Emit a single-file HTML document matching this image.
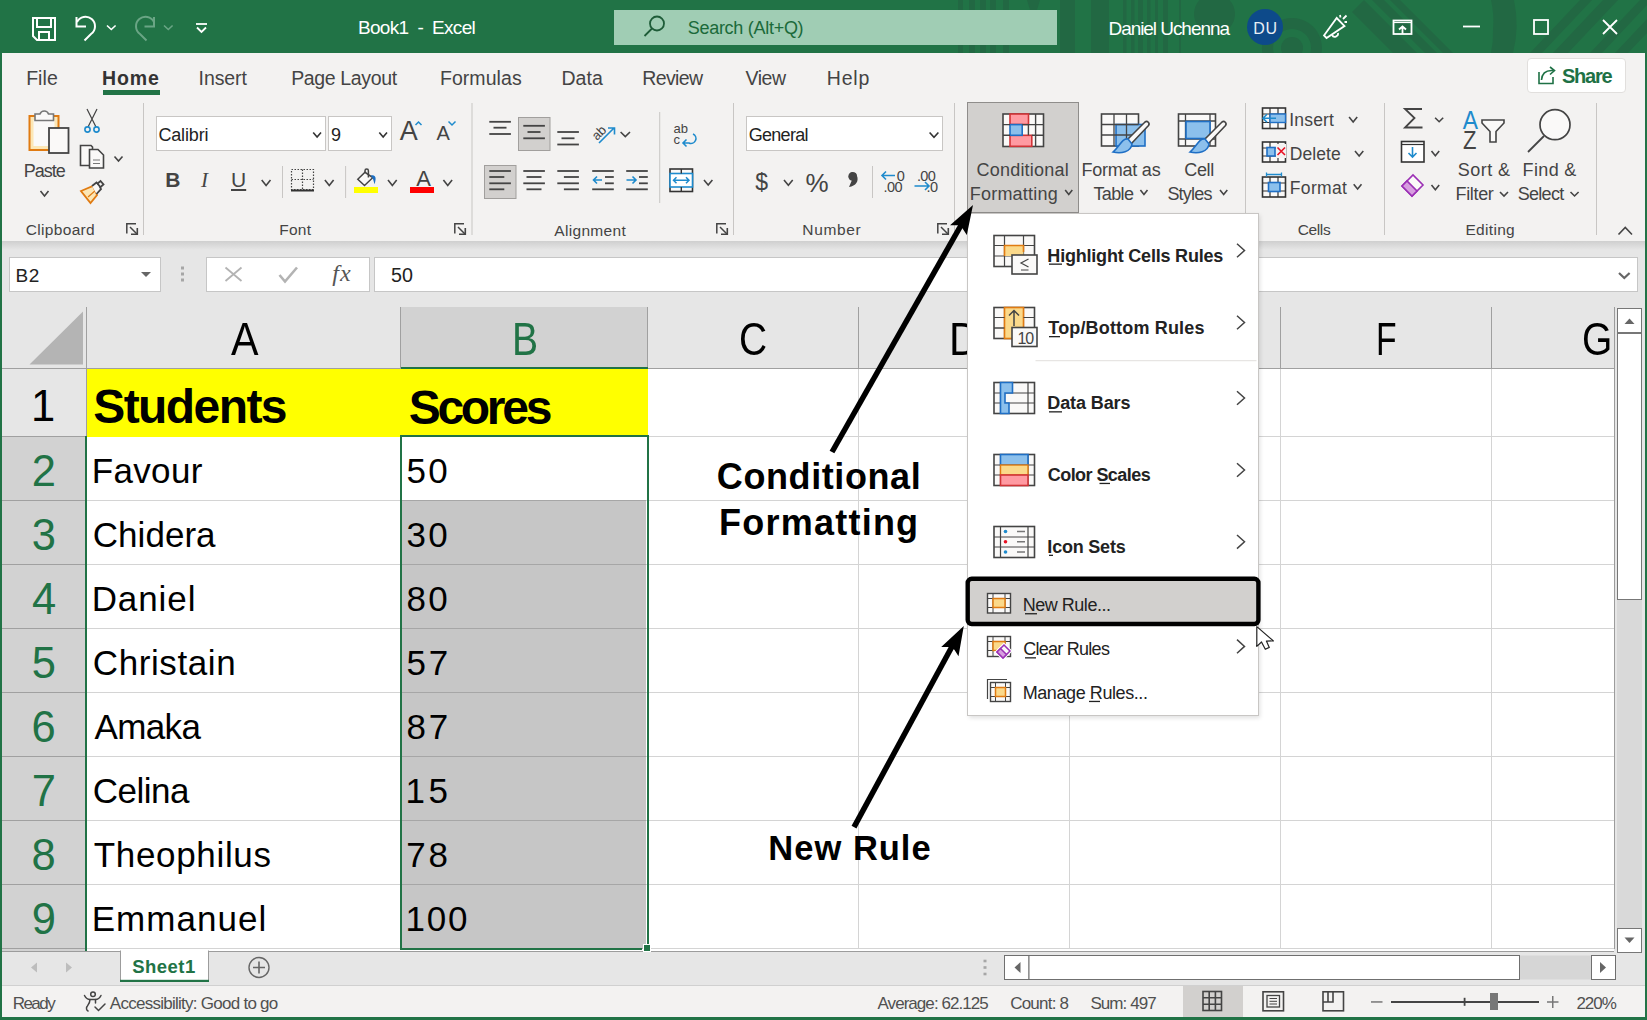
<!DOCTYPE html>
<html><head><meta charset="utf-8">
<style>
*{margin:0;padding:0;box-sizing:border-box}
html,body{width:1647px;height:1020px;overflow:hidden;background:#217346;font-family:"Liberation Sans",sans-serif}
.a{position:absolute}
.t{position:absolute;white-space:pre;line-height:normal}
svg{position:absolute;left:0;top:0;overflow:visible}
</style></head><body>

<div class="a" style="left:0;top:0;width:1647px;height:53px;background:#217346"></div>
<div class="a" style="left:2px;top:53px;width:1643px;height:188px;background:#f3f2f1"></div>
<div class="a" style="left:2px;top:241px;width:1643px;height:712px;background:#e6e6e6"></div>
<div class="a" style="left:2px;top:241px;width:1643px;height:9px;background:linear-gradient(#cfcfcf,#e6e6e6)"></div>
<svg width="1647" height="53" viewBox="0 0 1647 53" style="overflow:hidden">
 <g fill="#226843">
  <rect x="958" y="0" width="5" height="53"/><rect x="969" y="0" width="6" height="53"/><rect x="980" y="0" width="6" height="53"/><rect x="990" y="0" width="6" height="53"/><rect x="1003" y="0" width="6" height="53"/>
  <path d="M1027 0 H1040 L1037 10 H1030 Z"/>
  <rect x="1060" y="0" width="15" height="53"/><rect x="1091" y="0" width="18" height="53"/>
  <rect x="1123" y="0" width="3.5" height="53"/><rect x="1131" y="0" width="3.5" height="53"/><rect x="1138" y="0" width="5" height="53"/><rect x="1147" y="0" width="3.5" height="53"/><rect x="1155" y="0" width="3" height="53"/><rect x="1163" y="0" width="5" height="53"/><rect x="1179" y="0" width="2" height="53"/>
  <circle cx="1214.5" cy="14" r="20.5"/>
  <path d="M1292 18 A30 30 0 1 1 1291.9 18 Z M1292 29 A19 19 0 1 0 1292.1 29 Z" fill-rule="evenodd"/>
  <circle cx="1292" cy="48" r="11"/>
  <path d="M1352 12 L1364 0 L1417 53 L1393 53 Z"/><path d="M1372 0 L1384 0 L1437 53 L1425 53 Z"/><path d="M1390 0 L1400 0 L1453 53 L1443 53 Z"/>
  <path d="M1400 30 m93 0 a93 93 0 0 0 -2 -30 h23 a116 116 0 0 1 -1 53 h-22 a93 93 0 0 0 2 -23 z"/>
  <path d="M1530 53 L1580 0 L1592 0 L1542 53 Z"/><path d="M1553 53 L1603 0 L1618 0 L1568 53 Z"/><path d="M1590 53 L1640 0 L1647 0 L1647 5 L1602 53 Z"/><path d="M1615 53 L1647 19 L1647 33 L1628 53 Z"/>
 </g>
 <g fill="none" stroke="#fff" stroke-width="2">
  <path d="M33 18 H55 V40 H37 L33 36 Z"/>
  <path d="M37 18 V27 H51 V18"/>
  <path d="M39 40 V32 H49 V40"/>
  <path d="M76.5 17 V26.5 H86"/>
  <path d="M77 26 A 9.5 9.5 0 1 1 91 38 L84.5 44.5" transform="translate(0,-4)"/>
  <path d="M107 25.5 L111.3 29.5 L115.6 25.5" stroke-width="1.6"/>
 </g>
 <g fill="none" stroke="#6aa585" stroke-width="2">
  <path d="M154 17 V26.5 H144.5"/>
  <path d="M154 26 A 9.5 9.5 0 1 0 140 38 L146.5 44.5" transform="translate(0,-4)"/>
  <path d="M164 25.5 L168.3 29.5 L172.6 25.5" stroke-width="1.6"/>
 </g>
 <g fill="none" stroke="#fff" stroke-width="1.8">
  <path d="M196 24 H207"/><path d="M197 27.5 L201.5 32 L206 27.5"/>
 </g>
 <rect x="614" y="10" width="443" height="35" fill="#a0cdb4"/>
 <g fill="none" stroke="#1e5c38" stroke-width="1.8">
  <circle cx="657" cy="23.5" r="7"/><path d="M652 28.5 L644.5 36"/>
 </g>
 <circle cx="1265" cy="27" r="18" fill="#0d4a8a"/>
 <g fill="none" stroke="#fff" stroke-width="1.8">
  <path d="M1324 35.5 L1336.7 18 L1344.5 26 L1326.5 38 Z"/>
  <path d="M1332 35 a3.2 3.2 0 0 0 6 -2"/>
  <path d="M1340 15 L1340.5 17.5 M1343 19 L1346.5 15.5 M1344.5 22 L1347 22"/>
  <rect x="1393.5" y="20.5" width="18" height="13.5"/><path d="M1393.5 22.5 H1411.5" stroke-width="1.2"/><path d="M1402.5 34 V26.5 M1399 29.5 L1402.5 26.5 L1406 29.5"/>
  <path d="M1463 26.5 H1480"/>
  <rect x="1534" y="20" width="14" height="14"/>
  <path d="M1603 20 L1617 34 M1617 20 L1603 34"/>
 </g>
</svg>
<div class="t" style="left:357.98px;top:17.41px;font-size:19px;letter-spacing:-0.716px;color:#fff;font-family:'Liberation Sans',sans-serif;">Book1  -  Excel</div>
<div class="t" style="left:687.69px;top:17.91px;font-size:18px;letter-spacing:-0.279px;color:#1b6a3a;font-family:'Liberation Sans',sans-serif;">Search (Alt+Q)</div>
<div class="t" style="left:1108.48px;top:17.60px;font-size:19px;letter-spacing:-1.051px;color:#fff;font-family:'Liberation Sans',sans-serif;">Daniel Uchenna</div>
<div class="t" style="left:1253.22px;top:19.92px;font-size:16px;letter-spacing:0.740px;color:#e8eef5;font-family:'Liberation Sans',sans-serif;">DU</div>
<div class="t" style="left:26.14px;top:66.75px;font-size:19.5px;letter-spacing:0.081px;color:#444;font-family:'Liberation Sans',sans-serif;">File</div>
<div class="t" style="left:198.55px;top:66.75px;font-size:19.5px;letter-spacing:-0.080px;color:#444;font-family:'Liberation Sans',sans-serif;">Insert</div>
<div class="t" style="left:291.14px;top:66.75px;font-size:19.5px;letter-spacing:-0.353px;color:#444;font-family:'Liberation Sans',sans-serif;">Page Layout</div>
<div class="t" style="left:439.94px;top:66.75px;font-size:19.5px;letter-spacing:0.061px;color:#444;font-family:'Liberation Sans',sans-serif;">Formulas</div>
<div class="t" style="left:561.44px;top:66.75px;font-size:19.5px;letter-spacing:0.038px;color:#444;font-family:'Liberation Sans',sans-serif;">Data</div>
<div class="t" style="left:642.14px;top:66.75px;font-size:19.5px;letter-spacing:-0.580px;color:#444;font-family:'Liberation Sans',sans-serif;">Review</div>
<div class="t" style="left:745.50px;top:66.75px;font-size:19.5px;letter-spacing:-0.476px;color:#444;font-family:'Liberation Sans',sans-serif;">View</div>
<div class="t" style="left:826.84px;top:66.75px;font-size:19.5px;letter-spacing:0.789px;color:#444;font-family:'Liberation Sans',sans-serif;">Help</div>
<div class="t" style="left:102.03px;top:66.75px;font-size:19.5px;letter-spacing:0.846px;color:#333;font-weight:bold;font-family:'Liberation Sans',sans-serif;">Home</div>
<div class="a" style="left:103px;top:90px;width:57px;height:5px;background:#217346"></div>
<div class="a" style="left:1527px;top:58px;width:99px;height:35px;background:#fff;border:1px solid #e1dfdd;border-radius:4px"></div>
<div class="t" style="left:1561.90px;top:65.30px;font-size:20px;letter-spacing:-1.200px;color:#1e7145;font-weight:bold;font-family:'Liberation Sans',sans-serif;">Share</div>
<svg width="1647" height="1020"><g fill="none" stroke="#1e7145" stroke-width="1.6">
<path d="M1539 72 V83.5 H1553 V77"/><path d="M1541.5 80 C1542 73 1546 70 1553 70.5"/><path d="M1550 67 L1554.5 70.5 L1550 74.5"/></g></svg>
<svg width="1647" height="1020">
<rect x="143.0" y="103" width="1" height="132" fill="#c8c6c4"/>
<rect x="471.5" y="103" width="1" height="132" fill="#c8c6c4"/>
<rect x="733.0" y="103" width="1" height="132" fill="#c8c6c4"/>
<rect x="954.0" y="103" width="1" height="132" fill="#c8c6c4"/>
<rect x="1245.0" y="103" width="1" height="132" fill="#c8c6c4"/>
<rect x="1384.0" y="103" width="1" height="132" fill="#c8c6c4"/>
<rect x="1596.0" y="103" width="1" height="132" fill="#c8c6c4"/>
<rect x="282.0" y="166" width="1" height="32" fill="#c8c6c4"/>
<rect x="345.1" y="166" width="1" height="32" fill="#c8c6c4"/>
<rect x="659.2" y="112" width="1" height="91" fill="#c8c6c4"/>
<rect x="872.0" y="166" width="1" height="32" fill="#c8c6c4"/>
<g fill="none" stroke="#444" stroke-width="1.5"><path d="M126.8 233.5 V223.8 H136"/><path d="M130 227 L137 234"/><path d="M137.3 228 V234.3 H131" stroke-width="1.6"/></g>
<g fill="none" stroke="#444" stroke-width="1.5"><path d="M454.8 233.5 V223.8 H464"/><path d="M458 227 L465 234"/><path d="M465.3 228 V234.3 H459" stroke-width="1.6"/></g>
<g fill="none" stroke="#444" stroke-width="1.5"><path d="M716.8 233.5 V223.8 H726"/><path d="M720 227 L727 234"/><path d="M727.3 228 V234.3 H721" stroke-width="1.6"/></g>
<g fill="none" stroke="#444" stroke-width="1.5"><path d="M937.8 233.5 V223.8 H947"/><path d="M941 227 L948 234"/><path d="M948.3 228 V234.3 H942" stroke-width="1.6"/></g>
<rect x="29.5" y="116" width="29" height="34" fill="#fce7b6" stroke="#e07b12" stroke-width="2"/>
<rect x="33.5" y="120" width="21" height="26" fill="#faf9f8"/>
<path d="M35 120.5 V114 H40 A4.5 4.5 0 0 1 48.5 114 H53.5 V120.5 Z" fill="#faf9f8" stroke="#777" stroke-width="1.6"/>
<rect x="49" y="128" width="19.5" height="25" fill="#faf9f8" stroke="#444" stroke-width="1.8"/>
<path d="M40.5 191 L44.5 196 L48.5 191" fill="none" stroke="#444" stroke-width="1.6"/>
<g fill="none" stroke="#444" stroke-width="1.2"><path d="M87 109 L96 127 M97 109 L88 127"/></g>
<g fill="none" stroke="#1e8bcd" stroke-width="1.6"><circle cx="87.5" cy="129.5" r="2.6"/><circle cx="96.5" cy="129.5" r="2.6"/></g>
<path d="M80.5 165.5 V145.5 H91 L92.5 147 V165.5 Z" fill="#faf9f8" stroke="#444" stroke-width="1.6"/>
<path d="M89.5 168 V149.5 H98 L103.5 155 V168 Z" fill="#faf9f8" stroke="#444" stroke-width="1.6"/>
<path d="M93 160 H100 M93 163.5 H100" stroke="#777" stroke-width="1"/>
<path d="M114.5 156.5 L118.5 161 L122.5 156.5" fill="none" stroke="#444" stroke-width="1.6"/>
<path d="M81 191 L93 186 L97 195 L90.5 203 Z" fill="#fce7b6" stroke="#e07b12" stroke-width="1.8"/>
<path d="M88 197 L96 190" stroke="#e07b12" stroke-width="1.2"/>
<path d="M92 186 L96.5 182.5 L99.5 186 L101 189 L96.5 194" fill="#faf9f8" stroke="#444" stroke-width="1.8"/>
<path d="M97 184 L100.5 181 L103.5 184.5 L100 187.5" fill="none" stroke="#444" stroke-width="1.8"/>
<rect x="156.5" y="116.5" width="169" height="34" fill="#fff" stroke="#c8c6c4" stroke-width="1"/>
<rect x="328.5" y="116.5" width="63" height="34" fill="#fff" stroke="#c8c6c4" stroke-width="1"/>
<path d="M313.2 132.5 L317.1 137 L321 132.5" fill="none" stroke="#333" stroke-width="1.6"/>
<path d="M379.3 132.5 L383.15 137 L387 132.5" fill="none" stroke="#333" stroke-width="1.6"/>
<path d="M415.5 125 L418.5 122 L421.5 125" fill="none" stroke="#1e8bcd" stroke-width="1.5"/>
<path d="M448.5 121.5 L452 125 L455.5 121.5" fill="none" stroke="#1e8bcd" stroke-width="1.5"/>
<path d="M261.7 180 L266.1 185.5 L270.5 180" fill="none" stroke="#444" stroke-width="1.6"/>
<path d="M324.9 180 L329.25 185.5 L333.6 180" fill="none" stroke="#444" stroke-width="1.6"/>
<path d="M388 180 L392.35 185.5 L396.7 180" fill="none" stroke="#444" stroke-width="1.6"/>
<path d="M443.4 180 L447.75 185.5 L452.1 180" fill="none" stroke="#444" stroke-width="1.6"/>
<g stroke="#444" stroke-width="1.2" stroke-dasharray="1.5 1.5" fill="none"><rect x="291.5" y="169.5" width="22" height="20"/><path d="M302.5 169.5 V189.5 M291.5 179.5 H313.5"/></g>
<rect x="291" y="189.5" width="23" height="2" fill="#333"/>
<path d="M357.8 179.3 L365 172.3 L372.7 177.7 L364.5 185.5 Z" fill="#faf9f8" stroke="#444" stroke-width="1.5" stroke-linejoin="miter"/>
<path d="M365 172.3 V170.8 A1.7 1.7 0 0 1 368.4 170.8 V177.5" fill="none" stroke="#444" stroke-width="1.5"/>
<path d="M370.7 175.5 C373 174.5 376 175.5 375.6 179 C375.4 181 375 183 374.5 184.3 C373.8 181 373 178 370.7 175.5 Z" fill="#1b6ec2"/>
<rect x="354" y="187" width="24" height="6" fill="#ffff00"/>
<rect x="410" y="187" width="24" height="6" fill="#ff0000"/>
<rect x="518.5" y="117.5" width="31.5" height="33" fill="#d2d0ce" stroke="#a19f9d" stroke-width="1"/>
<rect x="484.5" y="165.5" width="31.5" height="33" fill="#d2d0ce" stroke="#a19f9d" stroke-width="1"/>
<rect x="489.3" y="120.89999999999999" width="21.6" height="1.8" fill="#444"/><rect x="489.3" y="133.1" width="21.6" height="1.8" fill="#444"/><rect x="493.5" y="126.8" width="13" height="1.8" fill="#444"/>
<rect x="523.3" y="124.89999999999999" width="21.6" height="1.8" fill="#444"/><rect x="523.3" y="137.4" width="21.6" height="1.8" fill="#444"/><rect x="527.5" y="131.1" width="13" height="1.8" fill="#444"/>
<rect x="557.3" y="131.1" width="21.6" height="1.8" fill="#444"/><rect x="557.3" y="143.6" width="21.6" height="1.8" fill="#444"/><rect x="561.5" y="137.4" width="13" height="1.8" fill="#444"/>
<rect x="489.3" y="170.1" width="21.6" height="1.8" fill="#444"/><rect x="489.3" y="182.4" width="21.6" height="1.8" fill="#444"/><rect x="489.3" y="176.1" width="15" height="1.8" fill="#444"/><rect x="489.3" y="188.4" width="15" height="1.8" fill="#444"/>
<rect x="523.3" y="170.1" width="21.6" height="1.8" fill="#444"/><rect x="523.3" y="182.4" width="21.6" height="1.8" fill="#444"/><rect x="526.5" y="176.1" width="15" height="1.8" fill="#444"/><rect x="526.5" y="188.4" width="15" height="1.8" fill="#444"/>
<rect x="557.3" y="170.1" width="21.6" height="1.8" fill="#444"/><rect x="557.3" y="182.4" width="21.6" height="1.8" fill="#444"/><rect x="563.9" y="176.1" width="15" height="1.8" fill="#444"/><rect x="563.9" y="188.4" width="15" height="1.8" fill="#444"/>
<rect x="592.2" y="170.1" width="21.6" height="1.8" fill="#444"/><rect x="592.2" y="188.4" width="21.6" height="1.8" fill="#444"/><rect x="605" y="176.1" width="8.8" height="1.8" fill="#444"/><rect x="605" y="182.4" width="8.8" height="1.8" fill="#444"/>
<path d="M602 180 H593.5 M597 176.5 L593.5 180 L597 183.5" fill="none" stroke="#1e8bcd" stroke-width="1.6"/>
<rect x="626.2" y="170.1" width="21.6" height="1.8" fill="#444"/><rect x="626.2" y="188.4" width="21.6" height="1.8" fill="#444"/><rect x="639" y="176.1" width="8.8" height="1.8" fill="#444"/><rect x="639" y="182.4" width="8.8" height="1.8" fill="#444"/>
<path d="M626.5 180 H636 M632.5 176.5 L636 180 L632.5 183.5" fill="none" stroke="#1e8bcd" stroke-width="1.6"/>
<text x="0" y="0" font-family="Liberation Sans" font-size="13" fill="#444" transform="translate(597,141) rotate(-45)">ab</text>
<path d="M599 143 L614 128 M608 128 H614.5 V134.5" fill="none" stroke="#1e8bcd" stroke-width="1.6"/>
<path d="M620.6 132 L625.3 136.6 L630 132" fill="none" stroke="#444" stroke-width="1.6"/>
<text x="673.5" y="133" font-family="Liberation Sans" font-size="13" fill="#444">ab</text>
<text x="673.5" y="144" font-family="Liberation Sans" font-size="13" fill="#444">c</text>
<path d="M693 134 A4.5 4.5 0 0 1 689 143 H683.5 M686.5 139.5 L683 143 L686.5 146.5" fill="none" stroke="#1e8bcd" stroke-width="1.6"/>
<rect x="670" y="169" width="22.5" height="22.5" fill="#faf9f8" stroke="#333" stroke-width="1.6"/>
<rect x="670" y="173.5" width="22.5" height="13.5" fill="#fff" stroke="#1e8bcd" stroke-width="1.6"/>
<path d="M681.3 169 V173.5 M681.3 187 V191.5" stroke="#333" stroke-width="1.4"/>
<path d="M673.5 180.3 H689 M676.5 177.3 L673.5 180.3 L676.5 183.3 M686 177.3 L689 180.3 L686 183.3" fill="none" stroke="#1e8bcd" stroke-width="1.5"/>
<path d="M704 180 L708.2 185 L712.4 180" fill="none" stroke="#444" stroke-width="1.6"/>
<rect x="746.5" y="116.5" width="196" height="34" fill="#fff" stroke="#c8c6c4" stroke-width="1"/>
<path d="M929.6 132.5 L934.0 137.3 L938.4 132.5" fill="none" stroke="#333" stroke-width="1.6"/>
<path d="M784 180 L788.35 185.3 L792.7 180" fill="none" stroke="#444" stroke-width="1.6"/>
<path d="M849 187 C856 186 859 181 857 176 A4 4 0 1 0 852 180" fill="#444"/>
<circle cx="852.5" cy="176.5" r="4.2" fill="#444"/>
<path d="M895 175.5 H882 M886 171.5 L882 175.5 L886 179.5" fill="none" stroke="#1e8bcd" stroke-width="1.6"/>
<path d="M914.5 186 H929 M925 182 L929 186 L925 190" fill="none" stroke="#1e8bcd" stroke-width="1.6"/>
</svg>
<div class="t" style="left:23.66px;top:161.01px;font-size:18px;letter-spacing:-0.985px;color:#444;font-family:'Liberation Sans',sans-serif;">Paste</div>
<div class="t" style="left:25.73px;top:220.87px;font-size:15.5px;letter-spacing:0.330px;color:#444;font-family:'Liberation Sans',sans-serif;">Clipboard</div>
<div class="t" style="left:279.36px;top:221.37px;font-size:15.5px;letter-spacing:0.206px;color:#444;font-family:'Liberation Sans',sans-serif;">Font</div>
<div class="t" style="left:554.30px;top:221.57px;font-size:15.5px;letter-spacing:0.322px;color:#444;font-family:'Liberation Sans',sans-serif;">Alignment</div>
<div class="t" style="left:802.36px;top:220.57px;font-size:15.5px;letter-spacing:0.634px;color:#444;font-family:'Liberation Sans',sans-serif;">Number</div>
<div class="t" style="left:1297.72px;top:220.57px;font-size:15.5px;letter-spacing:-0.368px;color:#444;font-family:'Liberation Sans',sans-serif;">Cells</div>
<div class="t" style="left:1465.46px;top:221.07px;font-size:15.5px;letter-spacing:0.316px;color:#444;font-family:'Liberation Sans',sans-serif;">Editing</div>
<div class="t" style="left:158.40px;top:124.91px;font-size:18px;letter-spacing:-0.145px;color:#222;font-family:'Liberation Sans',sans-serif;">Calibri</div>
<div class="t" style="left:330.89px;top:124.91px;font-size:18px;letter-spacing:0.000px;color:#222;font-family:'Liberation Sans',sans-serif;">9</div>
<div class="t" style="left:748.80px;top:125.01px;font-size:18px;letter-spacing:-0.737px;color:#222;font-family:'Liberation Sans',sans-serif;">General</div>
<div class="t" style="left:399.70px;top:115.77px;font-size:27px;letter-spacing:0.000px;color:#444;font-family:'Liberation Sans',sans-serif;">A</div>
<div class="t" style="left:436.60px;top:122.10px;font-size:20px;letter-spacing:0.000px;color:#444;font-family:'Liberation Sans',sans-serif;">A</div>
<div class="t" style="left:165.13px;top:167.90px;font-size:21px;letter-spacing:0.000px;color:#444;font-weight:bold;font-family:'Liberation Sans',sans-serif;">B</div>
<div class="t" style="left:201.00px;top:168.19px;font-size:21px;letter-spacing:0.000px;color:#444;font-style:italic;font-family:'Liberation Serif',sans-serif;">I</div>
<div class="t" style="left:231.03px;top:167.90px;font-size:21px;letter-spacing:0.000px;color:#444;font-family:'Liberation Sans',sans-serif;text-decoration:underline;text-underline-offset:2px">U</div>
<div class="t" style="left:416.20px;top:165.99px;font-size:22px;letter-spacing:0.000px;color:#444;font-family:'Liberation Sans',sans-serif;">A</div>
<div class="t" style="left:755.27px;top:168.59px;font-size:23px;letter-spacing:0.000px;color:#444;font-family:'Liberation Sans',sans-serif;">$</div>
<div class="t" style="left:805.59px;top:168.07px;font-size:26px;letter-spacing:0.000px;color:#444;font-family:'Liberation Sans',sans-serif;">%</div>
<div class="t" style="left:896.72px;top:167.58px;font-size:14.5px;letter-spacing:0.000px;color:#444;font-family:'Liberation Sans',sans-serif;">0</div>
<div class="t" style="left:883.50px;top:179.28px;font-size:14.5px;letter-spacing:-0.600px;color:#444;font-family:'Liberation Sans',sans-serif;">.00</div>
<div class="t" style="left:916.90px;top:167.58px;font-size:14.5px;letter-spacing:-0.600px;color:#444;font-family:'Liberation Sans',sans-serif;">.00</div>
<div class="t" style="left:926.50px;top:179.28px;font-size:14.5px;letter-spacing:-0.600px;color:#444;font-family:'Liberation Sans',sans-serif;">.0</div>
<div class="a" style="left:967px;top:102px;width:112px;height:111px;background:#d2d0ce;border:1px solid #8f8d8b"></div>
<div class="t" style="left:976.50px;top:159.71px;font-size:18px;letter-spacing:0.217px;color:#444;font-family:'Liberation Sans',sans-serif;">Conditional</div>
<div class="t" style="left:969.66px;top:183.91px;font-size:18px;letter-spacing:0.241px;color:#444;font-family:'Liberation Sans',sans-serif;">Formatting</div>
<div class="t" style="left:1081.56px;top:159.71px;font-size:18px;letter-spacing:-0.241px;color:#444;font-family:'Liberation Sans',sans-serif;">Format as</div>
<div class="t" style="left:1093.44px;top:183.91px;font-size:18px;letter-spacing:-0.613px;color:#444;font-family:'Liberation Sans',sans-serif;">Table</div>
<div class="t" style="left:1184.30px;top:159.71px;font-size:18px;letter-spacing:-0.363px;color:#444;font-family:'Liberation Sans',sans-serif;">Cell</div>
<div class="t" style="left:1167.39px;top:183.91px;font-size:18px;letter-spacing:-0.762px;color:#444;font-family:'Liberation Sans',sans-serif;">Styles</div>
<div class="t" style="left:1289.33px;top:110.06px;font-size:17.5px;letter-spacing:0.162px;color:#444;font-family:'Liberation Sans',sans-serif;">Insert</div>
<div class="t" style="left:1289.80px;top:144.16px;font-size:17.5px;letter-spacing:0.062px;color:#444;font-family:'Liberation Sans',sans-serif;">Delete</div>
<div class="t" style="left:1289.80px;top:177.86px;font-size:17.5px;letter-spacing:0.340px;color:#444;font-family:'Liberation Sans',sans-serif;">Format</div>
<div class="t" style="left:1457.79px;top:159.71px;font-size:18px;letter-spacing:0.446px;color:#444;font-family:'Liberation Sans',sans-serif;">Sort &amp;</div>
<div class="t" style="left:1455.56px;top:183.71px;font-size:18px;letter-spacing:-0.350px;color:#444;font-family:'Liberation Sans',sans-serif;">Filter</div>
<div class="t" style="left:1522.56px;top:159.71px;font-size:18px;letter-spacing:0.358px;color:#444;font-family:'Liberation Sans',sans-serif;">Find &amp;</div>
<div class="t" style="left:1517.79px;top:183.71px;font-size:18px;letter-spacing:-0.730px;color:#444;font-family:'Liberation Sans',sans-serif;">Select</div>
<svg width="1647" height="1020">
<rect x="1003" y="114" width="40.5" height="32.5" fill="#faf9f8" stroke="#444" stroke-width="1.6"/>
<rect x="1010" y="114" width="18.5" height="10.5" fill="#ff9aa2" stroke="#d13438" stroke-width="1.6"/>
<rect x="1010" y="135.3" width="21.8" height="11" fill="#ff9aa2" stroke="#d13438" stroke-width="1.6"/>
<rect x="1010" y="124.6" width="12.2" height="10.7" fill="#8cc0ec" stroke="#1f6fc5" stroke-width="1.6"/>
<path d="M1003 124.6 H1010 M1022.2 124.6 H1043.5 M1003 135.3 H1010 M1031.8 135.3 H1043.5 M1035.6 114 V146.5 M1028.4 124.6 V135.3" stroke="#444" stroke-width="1.4" fill="none"/>
<path d="M1065.2 190 L1068.75 194.4 L1072.3 190" fill="none" stroke="#444" stroke-width="1.6"/>
<rect x="1101.5" y="114" width="37" height="32" fill="#faf9f8" stroke="#444" stroke-width="1.6"/>
<rect x="1116" y="124.5" width="29" height="21.5" fill="#8cc0ec" stroke="#1f6fc5" stroke-width="1.6"/>
<path d="M1101.5 124.5 H1138.5 M1101.5 135 H1138.5 M1114 114 V146 M1126.5 114 V146" stroke="#444" stroke-width="1.3" fill="none"/>
<path d="M1127 140 L1145 122 A2.5 2.5 0 0 1 1148.5 125.5 L1131 144" fill="#faf9f8" stroke="#444" stroke-width="1.6"/>
<path d="M1128 139 C1122 138 1120 146 1113 152 C1121 154 1131 152 1132 144 Z" fill="#8cc0ec" stroke="#1f6fc5" stroke-width="1.6"/>
<path d="M1140.4 190 L1143.95 194.4 L1147.5 190" fill="none" stroke="#444" stroke-width="1.6"/>
<rect x="1178.5" y="114" width="37" height="32" fill="#faf9f8" stroke="#444" stroke-width="1.6"/>
<path d="M1178.5 121 H1215.5 M1178.5 139 H1215.5 M1185.5 114 V146 M1210 114 V146" stroke="#444" stroke-width="1.3" fill="none"/>
<rect x="1186" y="121.5" width="24" height="17" fill="#8cc0ec" stroke="#1f6fc5" stroke-width="1.6"/>
<path d="M1204 140 L1222 122 A2.5 2.5 0 0 1 1225.5 125.5 L1208 144" fill="#faf9f8" stroke="#444" stroke-width="1.6"/>
<path d="M1205 139 C1199 138 1197 146 1190 152 C1198 154 1208 152 1209 144 Z" fill="#8cc0ec" stroke="#1f6fc5" stroke-width="1.6"/>
<path d="M1220 190 L1223.65 194.4 L1227.3 190" fill="none" stroke="#444" stroke-width="1.6"/>
<rect x="1262.5" y="108" width="23" height="20.5" fill="#faf9f8" stroke="#333" stroke-width="1.6"/>
<path d="M1262.5 114 H1285.5 M1262.5 122.5 H1285.5 M1270 108 V128.5 M1278 108 V128.5" stroke="#333" stroke-width="1.2"/>
<rect x="1270" y="114" width="15.5" height="8.5" fill="#8cc0ec" stroke="#1f6fc5" stroke-width="1.4"/>
<path d="M1276 118.3 H1263 M1267 114.3 L1263 118.3 L1267 122.3" fill="none" stroke="#1e8bcd" stroke-width="1.6"/>
<path d="M1349.1 117 L1353.15 122 L1357.2 117" fill="none" stroke="#444" stroke-width="1.6"/>
<rect x="1262.5" y="142" width="23" height="20" fill="#faf9f8" stroke="#333" stroke-width="1.6"/>
<path d="M1262.5 148 H1285.5 M1262.5 156 H1285.5 M1270 142 V162 M1278 142 V162" stroke="#333" stroke-width="1.2"/>
<rect x="1267" y="147.5" width="8" height="8.5" fill="#8cc0ec" stroke="#1f6fc5" stroke-width="1.6"/>
<rect x="1276" y="144" width="10" height="14" fill="#f3f2f1"/>
<path d="M1277.5 147.5 L1285 155 M1285 147.5 L1277.5 155" stroke="#e81123" stroke-width="1.6"/>
<path d="M1355 151.1 L1359.15 156.1 L1363.3 151.1" fill="none" stroke="#444" stroke-width="1.6"/>
<rect x="1262.5" y="177" width="23" height="20" fill="#faf9f8" stroke="#333" stroke-width="1.6"/>
<path d="M1262.5 183 H1285.5 M1262.5 191 H1285.5 M1270 177 V197 M1278 177 V197" stroke="#333" stroke-width="1.2"/>
<rect x="1268.5" y="182.5" width="11.5" height="9" fill="#8cc0ec" stroke="#1f6fc5" stroke-width="1.6"/>
<path d="M1266.5 174.5 H1281.5 M1266.5 172.5 V176.5 M1281.5 172.5 V176.5" stroke="#1e8bcd" stroke-width="1.3"/>
<path d="M1353.7 184.2 L1357.6 189 L1361.5 184.2" fill="none" stroke="#444" stroke-width="1.6"/>
<path d="M1422 109 H1405 L1414.5 118 L1405 127.5 H1422.5" fill="none" stroke="#444" stroke-width="1.8"/>
<path d="M1435.1 117.7 L1439.15 121.7 L1443.2 117.7" fill="none" stroke="#444" stroke-width="1.6"/>
<rect x="1401.5" y="141.5" width="22.5" height="20.5" fill="#fff" stroke="#333" stroke-width="1.6"/>
<path d="M1401.5 144.5 H1424" stroke="#333" stroke-width="1.2"/>
<path d="M1412.5 147 V157 M1408.5 153 L1412.5 157 L1416.5 153" fill="none" stroke="#1e8bcd" stroke-width="1.6"/>
<path d="M1431.5 151 L1435.35 155.8 L1439.2 151" fill="none" stroke="#444" stroke-width="1.6"/>
<path d="M1402 186 L1413 175 L1423 185 L1412 196 Z" fill="#faf9f8" stroke="#9b30b5" stroke-width="1.6"/>
<path d="M1402 186 L1407 181 L1417 191 L1412 196 Z" fill="#d79ee0" stroke="#9b30b5" stroke-width="1.6"/>
<path d="M1431.5 185 L1435.35 189.8 L1439.2 185" fill="none" stroke="#444" stroke-width="1.6"/>
<text x="0" y="0" font-family="Liberation Sans" font-size="26" fill="#1e8bcd" transform="translate(1462.8,128.7) scale(0.88,1)">A</text>
<text x="0" y="0" font-family="Liberation Sans" font-size="26" fill="#444" transform="translate(1463,149.3) scale(0.85,1)">Z</text>
<path d="M1482 120 H1504 V123 L1496 131.5 V142 H1490 V131.5 L1482 123 Z" fill="#faf9f8" stroke="#444" stroke-width="1.6"/>
<path d="M1500 192 L1504.0 196 L1508 192" fill="none" stroke="#444" stroke-width="1.6"/>
<circle cx="1555" cy="124.7" r="15" fill="#faf9f8" stroke="#444" stroke-width="1.7"/>
<path d="M1544 136 L1528 152" stroke="#444" stroke-width="1.8"/>
<path d="M1570.5 192 L1574.55 196 L1578.6 192" fill="none" stroke="#444" stroke-width="1.6"/>
<path d="M1618.5 234.5 L1625.25 227.5 L1632 234.5" fill="none" stroke="#444" stroke-width="1.6"/>
</svg>
<svg width="1647" height="1020">
<rect x="9.5" y="257.5" width="151" height="34" fill="#fff" stroke="#c6c6c6"/>
<path d="M141 272 L146 277 L151 272 Z" fill="#666"/>
<rect x="181" y="266.5" width="3" height="3" fill="#a6a6a6"/>
<rect x="181" y="272.5" width="3" height="3" fill="#a6a6a6"/>
<rect x="181" y="278.5" width="3" height="3" fill="#a6a6a6"/>
<rect x="206.5" y="257.5" width="163" height="34" fill="#fff" stroke="#c6c6c6"/>
<path d="M225.5 267.5 L241.5 281 M241.5 267.5 L225.5 281" stroke="#b3b3b3" stroke-width="1.8"/>
<path d="M279.5 275 L285 281.5 L297 267.5" fill="none" stroke="#b3b3b3" stroke-width="2.6"/>
<rect x="374.5" y="257.5" width="1263" height="34" fill="#fff" stroke="#c6c6c6"/>
<path d="M1619 273 L1624.3 278 L1629.6 273" fill="none" stroke="#666" stroke-width="2.2"/>
<rect x="2" y="307" width="1612" height="61" fill="#e6e6e6"/>
<rect x="401" y="307" width="246" height="61" fill="#d2d2d2"/>
<path d="M29.5 364.5 L83 311.5 V364.5 Z" fill="#b4b4b4"/>
<rect x="86" y="307" width="1" height="61" fill="#a0a0a0"/>
<rect x="400" y="307" width="1" height="61" fill="#a0a0a0"/>
<rect x="647" y="307" width="1" height="61" fill="#a0a0a0"/>
<rect x="858" y="307" width="1" height="61" fill="#a0a0a0"/>
<rect x="1069" y="307" width="1" height="61" fill="#a0a0a0"/>
<rect x="1280" y="307" width="1" height="61" fill="#a0a0a0"/>
<rect x="1491" y="307" width="1" height="61" fill="#a0a0a0"/>
<rect x="2" y="368" width="1612" height="1" fill="#a0a0a0"/>
<rect x="401" y="367" width="247" height="2" fill="#217346"/>
<rect x="2" y="369" width="84" height="67" fill="#e6e6e6"/>
<rect x="2" y="436" width="84" height="515" fill="#d2d2d2"/>
<rect x="2" y="436" width="84" height="1" fill="#a0a0a0"/>
<rect x="2" y="500" width="84" height="1" fill="#a0a0a0"/>
<rect x="2" y="564" width="84" height="1" fill="#a0a0a0"/>
<rect x="2" y="628" width="84" height="1" fill="#a0a0a0"/>
<rect x="2" y="692" width="84" height="1" fill="#a0a0a0"/>
<rect x="2" y="756" width="84" height="1" fill="#a0a0a0"/>
<rect x="2" y="820" width="84" height="1" fill="#a0a0a0"/>
<rect x="2" y="884" width="84" height="1" fill="#a0a0a0"/>
<rect x="2" y="948" width="84" height="1" fill="#a0a0a0"/>
<rect x="86" y="369" width="1" height="67" fill="#a0a0a0"/>
<rect x="85" y="436" width="2" height="515" fill="#217346"/>
<rect x="87" y="369" width="1527" height="582" fill="#fff"/>
<rect x="87" y="369" width="561" height="68" fill="#ffff00"/>
<rect x="858" y="369" width="1" height="580" fill="#d4d4d4"/>
<rect x="1069" y="369" width="1" height="580" fill="#d4d4d4"/>
<rect x="1280" y="369" width="1" height="580" fill="#d4d4d4"/>
<rect x="1491" y="369" width="1" height="580" fill="#d4d4d4"/>
<rect x="400" y="436" width="1" height="513" fill="#d4d4d4"/>
<rect x="648" y="436" width="966" height="1" fill="#d4d4d4"/>
<rect x="87" y="500" width="1527" height="1" fill="#d4d4d4"/>
<rect x="87" y="564" width="1527" height="1" fill="#d4d4d4"/>
<rect x="87" y="628" width="1527" height="1" fill="#d4d4d4"/>
<rect x="87" y="692" width="1527" height="1" fill="#d4d4d4"/>
<rect x="87" y="756" width="1527" height="1" fill="#d4d4d4"/>
<rect x="87" y="820" width="1527" height="1" fill="#d4d4d4"/>
<rect x="87" y="884" width="1527" height="1" fill="#d4d4d4"/>
<rect x="87" y="948" width="1527" height="1" fill="#d4d4d4"/>
<rect x="402" y="501" width="244" height="447" fill="#c6c6c6"/>
<rect x="402" y="500" width="244" height="1" fill="#a6a6a6"/>
<rect x="402" y="564" width="244" height="1" fill="#a6a6a6"/>
<rect x="402" y="628" width="244" height="1" fill="#a6a6a6"/>
<rect x="402" y="692" width="244" height="1" fill="#a6a6a6"/>
<rect x="402" y="756" width="244" height="1" fill="#a6a6a6"/>
<rect x="402" y="820" width="244" height="1" fill="#a6a6a6"/>
<rect x="402" y="884" width="244" height="1" fill="#a6a6a6"/>
<rect x="402" y="948" width="244" height="1" fill="#a6a6a6"/>
<rect x="1614" y="307" width="31" height="646" fill="#e6e6e6"/>
<rect x="1617" y="333" width="25" height="595" fill="#d9d9d9"/>
<rect x="1614" y="307" width="1" height="642" fill="#9c9c9c"/>
<rect x="1617.5" y="308.5" width="24" height="24" fill="#fff" stroke="#777"/>
<path d="M1624.5 324 L1629.5 318.5 L1634.5 324 Z" fill="#666"/>
<rect x="1617.5" y="333.5" width="24" height="266" fill="#fff" stroke="#777"/>
<rect x="2" y="952" width="1643" height="33" fill="#e6e6e6"/>
<rect x="2" y="951" width="118" height="1" fill="#9c9c9c"/><rect x="209" y="951" width="1405" height="1" fill="#9c9c9c"/>
<rect x="1617.5" y="928.5" width="24" height="24" fill="#fff" stroke="#777"/>
<path d="M1624.5 937.5 L1629.5 943 L1634.5 937.5 Z" fill="#666"/>
<path d="M37 962.5 L31 967.5 L37 972.5 Z" fill="#bdbdbd"/>
<path d="M66 962.5 L72 967.5 L66 972.5 Z" fill="#bdbdbd"/>
<rect x="120" y="949" width="89" height="32" fill="#fff"/><rect x="120" y="950.5" width="1" height="30" fill="#9c9c9c"/><rect x="208" y="950.5" width="1" height="30" fill="#9c9c9c"/>
<rect x="120" y="979.8" width="89" height="2.2" fill="#217346"/>
<circle cx="259" cy="967.5" r="10" fill="none" stroke="#666" stroke-width="1.4"/>
<path d="M259 961.5 V973.5 M253 967.5 H265" stroke="#666" stroke-width="1.6"/>
<rect x="983.5" y="959.7" width="3" height="2.6" fill="#a6a6a6"/>
<rect x="983.5" y="966.2" width="3" height="2.6" fill="#a6a6a6"/>
<rect x="983.5" y="972.7" width="3" height="2.6" fill="#a6a6a6"/>
<rect x="1004.5" y="955.5" width="591" height="24" fill="#d6d6d6" stroke="none"/>
<rect x="1004.5" y="955.5" width="24.5" height="24" fill="#fff" stroke="#6f6f6f"/>
<path d="M1020.5 962 L1014.5 967.5 L1020.5 973 Z" fill="#666"/>
<rect x="1029" y="955.5" width="490.5" height="24" fill="#fff" stroke="#6f6f6f"/>
<rect x="1591.5" y="955.5" width="24" height="24" fill="#fff" stroke="#6f6f6f"/>
<path d="M1600 962 L1606 967.5 L1600 973 Z" fill="#666"/>
<rect x="400" y="435" width="2" height="515" fill="#217346"/><rect x="647" y="435" width="2" height="509" fill="#217346"/>
<rect x="400" y="435" width="249" height="2" fill="#217346"/><rect x="400" y="948" width="242" height="2" fill="#217346"/>
<rect x="643" y="944" width="8" height="8" fill="#fff"/>
<rect x="644" y="945" width="6" height="6" fill="#217346"/>
<rect x="2" y="985" width="1643" height="32" fill="#f3f2f1"/>
<rect x="2" y="985" width="1643" height="1" fill="#d0d0d0"/>
<rect x="1183" y="986" width="60" height="31" fill="#d2d0ce"/>
<g fill="none" stroke="#444" stroke-width="1.6"><rect x="1203" y="991.5" width="18.5" height="19"/><path d="M1209.2 991.5 V1010.5 M1215.4 991.5 V1010.5 M1203 997.8 H1221.5 M1203 1004.2 H1221.5"/></g>
<g fill="none" stroke="#444" stroke-width="1.6"><rect x="1263" y="991.8" width="20.5" height="19"/><rect x="1267" y="995.5" width="12.5" height="11.5" stroke-width="1.3"/><path d="M1269.5 998.5 H1277 M1269.5 1001.3 H1277 M1269.5 1004 H1277" stroke-width="1"/></g>
<g fill="none" stroke="#444" stroke-width="1.6"><rect x="1323" y="991.8" width="20.5" height="19"/><path d="M1323 1002 H1333 V991.8 M1328 991.8 V1002"/></g>
<rect x="1371" y="1001.2" width="11.5" height="1.5" fill="#777"/>
<rect x="1391" y="1001" width="148" height="2" fill="#444"/>
<rect x="1463.7" y="997.8" width="1.8" height="8" fill="#444"/>
<rect x="1490" y="993" width="8" height="17" fill="#777"/>
<path d="M1547 1002 H1558.5 M1552.75 996 V1008" stroke="#777" stroke-width="1.5"/>
</svg>
<div class="t" style="left:15.38px;top:265.00px;font-size:19px;letter-spacing:0.590px;color:#222;font-family:'Liberation Sans',sans-serif;">B2</div>
<div class="t" style="left:391.11px;top:263.97px;font-size:19.7px;letter-spacing:0.011px;color:#222;font-family:'Liberation Sans',sans-serif;">50</div>
<div class="t" style="left:332.26px;top:260.22px;font-size:24px;letter-spacing:1.080px;color:#555;font-style:italic;font-family:'Liberation Serif',sans-serif;">fx</div>
<div class="t" style="left:230.60px;top:314.12px;font-size:45.5px;color:#000;transform:scaleX(0.906);transform-origin:0 0">A</div>
<div class="t" style="left:511.67px;top:314.12px;font-size:45.5px;color:#217346;transform:scaleX(0.859);transform-origin:0 0">B</div>
<div class="t" style="left:739.36px;top:314.12px;font-size:45.5px;color:#000;transform:scaleX(0.855);transform-origin:0 0">C</div>
<div class="t" style="left:949.37px;top:314.12px;font-size:45.5px;color:#000;transform:scaleX(0.916);transform-origin:0 0">D</div>
<div class="t" style="left:1376.11px;top:314.12px;font-size:45.5px;color:#000;transform:scaleX(0.740);transform-origin:0 0">F</div>
<div class="t" style="left:1582.05px;top:314.12px;font-size:45.5px;color:#000;transform:scaleX(0.856);transform-origin:0 0">G</div>
<div class="t" style="left:31.08px;top:381.83px;font-size:43.5px;letter-spacing:0.000px;color:#000;font-family:'Liberation Sans',sans-serif;">1</div>
<div class="t" style="left:31.73px;top:446.83px;font-size:43.5px;letter-spacing:0.000px;color:#217346;font-family:'Liberation Sans',sans-serif;">2</div>
<div class="t" style="left:31.73px;top:510.83px;font-size:43.5px;letter-spacing:0.000px;color:#217346;font-family:'Liberation Sans',sans-serif;">3</div>
<div class="t" style="left:31.95px;top:574.83px;font-size:43.5px;letter-spacing:0.000px;color:#217346;font-family:'Liberation Sans',sans-serif;">4</div>
<div class="t" style="left:31.73px;top:638.83px;font-size:43.5px;letter-spacing:0.000px;color:#217346;font-family:'Liberation Sans',sans-serif;">5</div>
<div class="t" style="left:31.51px;top:702.83px;font-size:43.5px;letter-spacing:0.000px;color:#217346;font-family:'Liberation Sans',sans-serif;">6</div>
<div class="t" style="left:31.73px;top:766.83px;font-size:43.5px;letter-spacing:0.000px;color:#217346;font-family:'Liberation Sans',sans-serif;">7</div>
<div class="t" style="left:31.62px;top:830.83px;font-size:43.5px;letter-spacing:0.000px;color:#217346;font-family:'Liberation Sans',sans-serif;">8</div>
<div class="t" style="left:31.73px;top:894.83px;font-size:43.5px;letter-spacing:0.000px;color:#217346;font-family:'Liberation Sans',sans-serif;">9</div>
<div class="t" style="left:91.70px;top:451.22px;font-size:35px;letter-spacing:0.355px;color:#000;font-family:'Liberation Sans',sans-serif;">Favour</div>
<div class="t" style="left:406.60px;top:451.22px;font-size:35px;letter-spacing:2.175px;color:#000;font-family:'Liberation Sans',sans-serif;">50</div>
<div class="t" style="left:92.75px;top:515.23px;font-size:35px;letter-spacing:0.042px;color:#000;font-family:'Liberation Sans',sans-serif;">Chidera</div>
<div class="t" style="left:406.60px;top:515.23px;font-size:35px;letter-spacing:2.175px;color:#000;font-family:'Liberation Sans',sans-serif;">30</div>
<div class="t" style="left:91.70px;top:579.23px;font-size:35px;letter-spacing:0.910px;color:#000;font-family:'Liberation Sans',sans-serif;">Daniel</div>
<div class="t" style="left:406.43px;top:579.23px;font-size:35px;letter-spacing:2.350px;color:#000;font-family:'Liberation Sans',sans-serif;">80</div>
<div class="t" style="left:92.75px;top:643.23px;font-size:35px;letter-spacing:0.606px;color:#000;font-family:'Liberation Sans',sans-serif;">Christain</div>
<div class="t" style="left:406.60px;top:643.23px;font-size:35px;letter-spacing:2.700px;color:#000;font-family:'Liberation Sans',sans-serif;">57</div>
<div class="t" style="left:94.50px;top:707.23px;font-size:35px;letter-spacing:-0.637px;color:#000;font-family:'Liberation Sans',sans-serif;">Amaka</div>
<div class="t" style="left:406.43px;top:707.23px;font-size:35px;letter-spacing:2.875px;color:#000;font-family:'Liberation Sans',sans-serif;">87</div>
<div class="t" style="left:92.75px;top:771.23px;font-size:35px;letter-spacing:-0.515px;color:#000;font-family:'Liberation Sans',sans-serif;">Celina</div>
<div class="t" style="left:405.38px;top:771.23px;font-size:35px;letter-spacing:3.575px;color:#000;font-family:'Liberation Sans',sans-serif;">15</div>
<div class="t" style="left:93.80px;top:835.23px;font-size:35px;letter-spacing:0.664px;color:#000;font-family:'Liberation Sans',sans-serif;">Theophilus</div>
<div class="t" style="left:406.25px;top:835.23px;font-size:35px;letter-spacing:2.700px;color:#000;font-family:'Liberation Sans',sans-serif;">78</div>
<div class="t" style="left:91.70px;top:899.23px;font-size:35px;letter-spacing:1.039px;color:#000;font-family:'Liberation Sans',sans-serif;">Emmanuel</div>
<div class="t" style="left:405.38px;top:899.23px;font-size:35px;letter-spacing:1.788px;color:#000;font-family:'Liberation Sans',sans-serif;">100</div>
<div class="t" style="left:93.26px;top:378.76px;font-size:48px;letter-spacing:-1.577px;color:#000;font-weight:bold;font-family:'Liberation Sans',sans-serif;">Students</div>
<div class="t" style="left:408.76px;top:380.26px;font-size:48px;letter-spacing:-3.304px;color:#000;font-weight:bold;font-family:'Liberation Sans',sans-serif;">Scores</div>
<div class="t" style="left:132.14px;top:956.16px;font-size:18.5px;letter-spacing:0.487px;color:#217346;font-weight:bold;font-family:'Liberation Sans',sans-serif;">Sheet1</div>
<div class="t" style="left:12.64px;top:993.81px;font-size:17px;letter-spacing:-1.518px;color:#505050;font-family:'Liberation Sans',sans-serif;">Ready</div>
<div class="t" style="left:109.80px;top:993.81px;font-size:17px;letter-spacing:-0.736px;color:#505050;font-family:'Liberation Sans',sans-serif;">Accessibility: Good to go</div>
<div class="t" style="left:877.50px;top:993.62px;font-size:17px;letter-spacing:-0.947px;color:#505050;font-family:'Liberation Sans',sans-serif;">Average: 62.125</div>
<div class="t" style="left:1010.15px;top:993.62px;font-size:17px;letter-spacing:-0.761px;color:#505050;font-family:'Liberation Sans',sans-serif;">Count: 8</div>
<div class="t" style="left:1090.43px;top:993.62px;font-size:17px;letter-spacing:-0.935px;color:#505050;font-family:'Liberation Sans',sans-serif;">Sum: 497</div>
<div class="t" style="left:1576.45px;top:993.62px;font-size:17px;letter-spacing:-1.025px;color:#505050;font-family:'Liberation Sans',sans-serif;">220%</div>
<svg width="1647" height="1020"><g fill="none" stroke="#444" stroke-width="1.5" stroke-linecap="round">
<circle cx="93" cy="994.3" r="2.3"/>
<path d="M84.5 995.5 C86 998.5 88 999.5 90 999.5 H95.5 C97.5 999.5 99.5 998.5 101 995.5"/>
<path d="M90 999.5 C90 1003 88.5 1004.5 87 1006.5 C86 1008 86.5 1010.5 88 1011"/>
<path d="M95.5 999.5 V1003"/>
<path d="M95 1007 L98.5 1010.5 L105 1004"/></g></svg>
<svg width="1647" height="1020">
<defs><filter id="sh" x="-10%" y="-10%" width="120%" height="120%"><feGaussianBlur stdDeviation="2"/></filter></defs>
<rect x="969" y="215" width="291" height="503" fill="#000" opacity="0.12" filter="url(#sh)"/>
<rect x="967.5" y="213.5" width="291" height="502" fill="#fff" stroke="#c8c6c4"/>
<rect x="1035.5" y="360.2" width="221" height="1" fill="#e1dfdd"/>
<rect x="994" y="235.5" width="40.5" height="31" fill="#faf9f8" stroke="#444" stroke-width="1.6"/><path d="M1004.5 235.5 V266.5 M1023.5 235.5 V266.5 M994 245.5 H1034.5 M994 256 H1034.5 " stroke="#444" stroke-width="1.2" fill="none"/>
<rect x="1004.5" y="245.5" width="19" height="10.5" fill="#fbd98a"/>
<path d="M1004.5 256 V245.5 H1023.5 V252" fill="none" stroke="#e07b12" stroke-width="1.6"/>
<rect x="1012" y="255" width="25" height="19" fill="#faf9f8" stroke="#444" stroke-width="1.6"/>
<path d="M1028.5 259 L1021 263 L1028.5 267 M1021 270 H1028.5" fill="none" stroke="#444" stroke-width="1.2"/>
<rect x="994" y="307.5" width="40.5" height="31" fill="#faf9f8" stroke="#444" stroke-width="1.6"/><path d="M1004.5 307.5 V338.5 M1023.5 307.5 V338.5 M994 317.5 H1034.5 M994 328 H1034.5 " stroke="#444" stroke-width="1.2" fill="none"/>
<rect x="1004.5" y="307.5" width="19" height="31" fill="#fbd98a" stroke="#e07b12" stroke-width="1.6"/>
<path d="M994 317.5 H1004.5 M1023.5 317.5 H1034.5 M994 328 H1004.5 M1023.5 328 H1034.5" stroke="#444" stroke-width="1.2"/>
<path d="M1014 326 V310.5 M1009 315.5 L1014 310.5 L1019 315.5" fill="none" stroke="#444" stroke-width="1.5"/>
<rect x="1012" y="327.5" width="25" height="19" fill="#faf9f8" stroke="#444" stroke-width="1.6"/>
<text x="1017.5" y="343.5" font-family="Liberation Sans" font-size="16" letter-spacing="-1.2" fill="#444">10</text>
<rect x="994" y="382.5" width="40.5" height="31" fill="#faf9f8" stroke="#444" stroke-width="1.6"/><path d="M1000.5 382.5 V413.5 M1028 382.5 V413.5 M994 393 H1034.5 M994 403 H1034.5 " stroke="#444" stroke-width="1.2" fill="none"/>
<path d="M1000.5 382.5 H1012.5 V393 H1005 V403 H1009 V413.5 H1000.5 Z" fill="#8cc0ec" stroke="#1f6fc5" stroke-width="1.6"/>
<rect x="994" y="454.5" width="40.5" height="31" fill="#faf9f8" stroke="#444" stroke-width="1.6"/><path d="M1000.5 454.5 V485.5 M1028 454.5 V485.5 M994 465 H1034.5 M994 475 H1034.5 " stroke="#444" stroke-width="1.2" fill="none"/>
<rect x="1000.5" y="454.5" width="27.5" height="10.5" fill="#8cc0ec" stroke="#1f6fc5" stroke-width="1.6"/>
<rect x="1000.5" y="465" width="27.5" height="10" fill="#fbd98a" stroke="#e07b12" stroke-width="1.4"/>
<rect x="1000.5" y="475" width="27.5" height="10.5" fill="#ff9aa2" stroke="#d13438" stroke-width="1.6"/>
<rect x="994" y="526.5" width="40.5" height="31" fill="#faf9f8" stroke="#444" stroke-width="1.6"/><path d="M1000.5 526.5 V557.5 M1028 526.5 V557.5 M994 537 H1034.5 M994 547 H1034.5 " stroke="#444" stroke-width="1.2" fill="none"/>
<circle cx="1005.5" cy="531.5" r="1.8" fill="#1e8bcd"/><circle cx="1005.5" cy="541.8" r="1.8" fill="#e81123"/><circle cx="1005.5" cy="552" r="1.8" fill="#1e8bcd"/>
<path d="M1017 531.5 H1025 M1017 541.8 H1025 M1017 552 H1025" stroke="#777" stroke-width="1.4"/>
<path d="M1237 243.7 L1244.5 250.5 L1237 257.3" fill="none" stroke="#444" stroke-width="1.5"/>
<path d="M1237 315.7 L1244.5 322.5 L1237 329.3" fill="none" stroke="#444" stroke-width="1.5"/>
<path d="M1237 391.2 L1244.5 398 L1237 404.8" fill="none" stroke="#444" stroke-width="1.5"/>
<path d="M1237 463.2 L1244.5 470 L1237 476.8" fill="none" stroke="#444" stroke-width="1.5"/>
<path d="M1237 535.0 L1244.5 541.8 L1237 548.5999999999999" fill="none" stroke="#444" stroke-width="1.5"/>
<path d="M1237 639.6 L1244.5 646.4 L1237 653.1999999999999" fill="none" stroke="#444" stroke-width="1.5"/>
<rect x="967.7" y="578.8" width="290.7" height="45.2" rx="4" fill="#d2d0ce" stroke="#000" stroke-width="4.4"/>
<rect x="987.5" y="593.5" width="23" height="19.5" fill="#faf9f8" stroke="#444" stroke-width="1.4"/><path d="M993 593.5 V613.0 M1005 593.5 V613.0 M987.5 598.5 H1010.5 M987.5 607.5 H1010.5 " stroke="#444" stroke-width="1" fill="none"/>
<rect x="993" y="598.5" width="12" height="9" fill="#fbd98a" stroke="#e07b12" stroke-width="1.5"/>
<rect x="987.5" y="636.5" width="23" height="20" fill="#faf9f8" stroke="#444" stroke-width="1.4"/><path d="M993 636.5 V656.5 M1005 636.5 V656.5 M987.5 641.5 H1010.5 M987.5 650.5 H1010.5 " stroke="#444" stroke-width="1" fill="none"/>
<rect x="993" y="641.5" width="12" height="9" fill="#fbd98a" stroke="#e07b12" stroke-width="1.5"/>
<path d="M996.5 652 L1004 644.5 L1010.5 651 L1003 658.5 Z" fill="#fff" stroke="#fff" stroke-width="3"/>
<path d="M997 652 L1004 645 L1010 651 L1003 658 Z" fill="#faf9f8" stroke="#9b30b5" stroke-width="1.5"/>
<path d="M997 652 L1000.5 648.5 L1006.5 654.5 L1003 658 Z" fill="#d79ee0" stroke="#9b30b5" stroke-width="1.5"/>
<path d="M987.5 699 V679.5 H1007" fill="none" stroke="#444" stroke-width="1.2"/>
<rect x="990.5" y="682.5" width="20" height="19" fill="#faf9f8" stroke="#444" stroke-width="1.4"/><path d="M995.5 682.5 V701.5 M1005.5 682.5 V701.5 M990.5 687.5 H1010.5 M990.5 696.5 H1010.5 " stroke="#444" stroke-width="1" fill="none"/>
<rect x="995.5" y="687.5" width="10" height="9" fill="#fbd98a" stroke="#e07b12" stroke-width="1.5"/>
</svg>
<div class="t" style="left:1047.33px;top:245.61px;font-size:18px;letter-spacing:-0.201px;color:#222;font-weight:bold;font-family:'Liberation Sans',sans-serif;">Highlight Cells Rules</div>
<div class="t" style="left:1048.32px;top:318.01px;font-size:18px;letter-spacing:0.165px;color:#222;font-weight:bold;font-family:'Liberation Sans',sans-serif;">Top/Bottom Rules</div>
<div class="t" style="left:1047.33px;top:393.31px;font-size:18px;letter-spacing:-0.109px;color:#222;font-weight:bold;font-family:'Liberation Sans',sans-serif;">Data Bars</div>
<div class="t" style="left:1047.78px;top:464.91px;font-size:18px;letter-spacing:-0.559px;color:#222;font-weight:bold;font-family:'Liberation Sans',sans-serif;">Color Scales</div>
<div class="t" style="left:1047.33px;top:536.81px;font-size:18px;letter-spacing:-0.203px;color:#222;font-weight:bold;font-family:'Liberation Sans',sans-serif;">Icon Sets</div>
<div class="t" style="left:1022.66px;top:595.21px;font-size:18px;letter-spacing:-0.471px;color:#222;font-family:'Liberation Sans',sans-serif;">New Rule...</div>
<div class="t" style="left:1023.20px;top:639.31px;font-size:18px;letter-spacing:-0.732px;color:#222;font-family:'Liberation Sans',sans-serif;">Clear Rules</div>
<div class="t" style="left:1022.66px;top:682.91px;font-size:18px;letter-spacing:-0.413px;color:#222;font-family:'Liberation Sans',sans-serif;">Manage Rules...</div>
<svg width="1647" height="1020"><g fill="#222"><rect x="1049" y="263.5" width="13" height="1.3"/><rect x="1049" y="336" width="11" height="1.3"/><rect x="1049" y="411.2" width="13" height="1.3"/><rect x="1099.5" y="482.8" width="10.5" height="1.3"/><rect x="1049" y="554.7" width="4" height="1.3"/><rect x="1025" y="613.1" width="12" height="1.3"/><rect x="1025" y="657.2" width="11" height="1.3"/><rect x="1089" y="700.8" width="11" height="1.3"/></g></svg>
<svg width="1647" height="1020">
<path d="M832 452 L964 220" stroke="#000" stroke-width="5.5"/>
<path d="M973 205 L950 225.3 L958.5 225.3 L962.4 228.2 L966.8 235 Z" fill="#000"/>
<path d="M854 827.1 L955 641" stroke="#000" stroke-width="5.5"/>
<path d="M963.8 625.9 L941.2 647.1 L949.4 647.1 L954.4 649.7 L958.5 656.2 Z" fill="#000"/>
<path d="M1256.8 626.6 V646.4 L1261.5 642 L1265.3 649.3 L1269.3 647.4 L1266.4 641.1 L1273.4 640.9 Z" fill="#fff" stroke="#222" stroke-width="1.2" stroke-linejoin="round"/>
</svg>
<div class="t" style="left:716.86px;top:455.72px;font-size:36px;letter-spacing:0.586px;color:#000;font-weight:bold;font-family:'Liberation Sans',sans-serif;">Conditional</div>
<div class="t" style="left:719.06px;top:502.42px;font-size:36px;letter-spacing:1.229px;color:#000;font-weight:bold;font-family:'Liberation Sans',sans-serif;">Formatting</div>
<div class="t" style="left:768.36px;top:829.38px;font-size:34.5px;letter-spacing:1.000px;color:#000;font-weight:bold;font-family:'Liberation Sans',sans-serif;">New Rule</div>
</body></html>
